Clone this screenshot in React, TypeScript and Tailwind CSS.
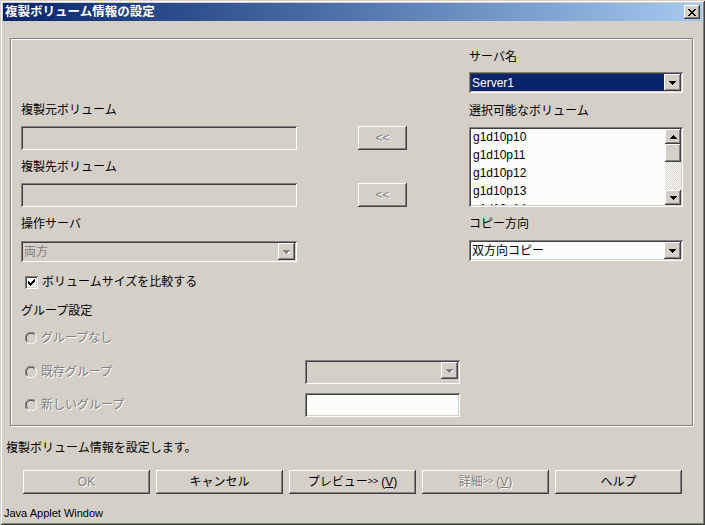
import React from "react";

const RAISED =
  "shadow-[inset_-1px_-1px_#404040,inset_1px_1px_#ffffff,inset_-2px_-2px_#808080,inset_2px_2px_#d4d0c8]";
const SUNKEN =
  "shadow-[inset_1px_1px_#808080,inset_-1px_-1px_#ffffff,inset_2px_2px_#404040,inset_-2px_-2px_#d4d0c8]";
const DIS = "text-[#808080] [text-shadow:1px_1px_0_#ffffff]";

function DownArrow({ disabled }: { disabled?: boolean }) {
  return (
    <svg width="7" height="4" viewBox="0 0 7 4" shapeRendering="crispEdges">
      {disabled && (
        <path d="M1 1h7v1h-1v1h-1v1h-1v1h-1v-1h-1v-1h-1v-1h-1z" fill="#ffffff" />
      )}
      <path d="M0 0h7v1h-1v1h-1v1h-1v1h-1v-1h-1v-1h-1v-1h-1z" fill={disabled ? "#808080" : "#000000"} />
    </svg>
  );
}

function UpArrow() {
  return (
    <svg width="7" height="4" viewBox="0 0 7 4" shapeRendering="crispEdges">
      <path d="M3 0h1v1h1v1h1v1h1v1h-7v-1h1v-1h1v-1h1z" fill="#000000" />
    </svg>
  );
}

function Combo({
  text,
  selected,
  disabled,
  white,
  className,
}: {
  text?: string;
  selected?: boolean;
  disabled?: boolean;
  white?: boolean;
  className?: string;
}) {
  return (
    <div className={`flex h-[21px] p-[2px] ${SUNKEN} ${white ? "bg-[#fbfdfb]" : "bg-[#d4d0c8]"} ${className ?? ""}`}>
      <div
        className={`flex flex-1 items-center pl-[1px] text-[12px] leading-none ${
          selected ? "bg-[#0a246a] text-white" : disabled ? "text-[#808080]" : "text-black"
        }`}
      >
        {text}
      </div>
      <div className={`flex h-[17px] w-[17px] items-center justify-center bg-[#d4d0c8] ${RAISED}`}>
        <DownArrow disabled={disabled} />
      </div>
    </div>
  );
}

function TextField({ white, className }: { white?: boolean; className?: string }) {
  return <div className={`h-[24px] ${SUNKEN} ${white ? "bg-[#fbfdfb]" : "bg-[#d4d0c8]"} ${className ?? ""}`} />;
}

function Btn({
  children,
  disabled,
  className,
}: {
  children: React.ReactNode;
  disabled?: boolean;
  className?: string;
}) {
  return (
    <div
      className={`flex h-[24px] items-center justify-center bg-[#d4d0c8] text-[12px] ${RAISED} ${
        disabled ? DIS : "text-black"
      } ${className ?? ""}`}
    >
      {children}
    </div>
  );
}

function Radio() {
  return (
    <svg width="12" height="12" viewBox="0 0 12 12">
      <circle cx="6" cy="6" r="5" fill="#d4d0c8" />
      <path d="M1.8 10.2 A5.5 5.5 0 0 1 10.2 1.8" fill="none" stroke="#808080" strokeWidth="1" />
      <path d="M10.2 1.8 A5.5 5.5 0 0 1 1.8 10.2" fill="none" stroke="#ffffff" strokeWidth="1" />
      <path d="M2.6 9.4 A4.5 4.5 0 0 1 9.4 2.6" fill="none" stroke="#404040" strokeWidth="1" />
    </svg>
  );
}

function Label({ children, className }: { children: React.ReactNode; className?: string }) {
  return <div className={`h-[16px] text-[12px] leading-[16px] text-black ${className ?? ""}`}>{children}</div>;
}

export default function App() {
  const items = ["g1d10p10", "g1d10p11", "g1d10p12", "g1d10p13", "g1d10p14"];
  return (
    <div
      className={`flex h-[525px] w-[705px] flex-col bg-[#d4d0c8] p-[3px] font-['Liberation_Sans','Noto_Sans_CJK_JP',sans-serif] shadow-[inset_1px_1px_#d4d0c8,inset_-1px_-1px_#404040,inset_2px_2px_#ffffff,inset_-2px_-2px_#808080]`}
    >
      {/* Title bar */}
      <div className="flex h-[18px] items-center justify-between bg-linear-to-r from-[#0a246a] to-[#a6caf0] pl-[2px] pr-[2px]">
        <div className="text-[12.5px] font-bold leading-none text-white">複製ボリューム情報の設定</div>
        <div className={`flex h-[14px] w-[16px] items-center justify-center bg-[#d4d0c8] ${RAISED}`}>
          <svg width="8" height="7" viewBox="0 0 8 7" shapeRendering="crispEdges">
            <path
              d="M0 0h2v1h1v1h2v-1h1v-1h2v1h-1v1h-1v1h-1v1h1v1h1v1h1v1h-2v-1h-1v-1h-2v1h-1v1h-2v-1h1v-1h1v-1h1v-1h-1v-1h-1v-1h-1z"
              fill="#000000"
            />
          </svg>
        </div>
      </div>

      {/* Group box */}
      <div className="ml-[7px] mt-[17px] h-[388px] w-[683px] border border-[#808080] pl-[10px] shadow-[inset_1px_1px_#ffffff,1px_1px_#ffffff]">
        <div className="flex items-start">
          {/* left column */}
          <div className="flex w-[276px] flex-col">
            <Label className="mt-[63px]">複製元ボリューム</Label>
            <TextField className="mt-[8px]" />
            <Label className="mt-[9px]">複製先ボリューム</Label>
            <TextField className="mt-[8px]" />
            <Label className="mt-[9px]">操作サーバ</Label>
            <Combo className="mt-[9px]" text="両方" disabled />
          </div>
          {/* middle column */}
          <div className="ml-[61px] flex w-[49px] flex-col">
            <Btn disabled className="mt-[87px] text-[9px]">
              &lt;&lt;
            </Btn>
            <Btn disabled className="mt-[33px] text-[9px]">
              &lt;&lt;
            </Btn>
          </div>
          {/* right column */}
          <div className="ml-[62px] flex w-[214px] flex-col">
            <Label className="mt-[10px]">サーバ名</Label>
            <Combo className="mt-[7px]" text="Server1" selected white />
            <Label className="mt-[10px]">選択可能なボリューム</Label>
            <div className={`mt-[8px] flex h-[80px] bg-[#fbfdfb] p-[2px] ${SUNKEN}`}>
              <div className="flex-1 overflow-hidden pl-[2px]">
                {items.map((it) => (
                  <div key={it} className="h-[18px] text-[12px] leading-[16px] text-black">
                    {it}
                  </div>
                ))}
              </div>
              <div className="flex w-[16px] flex-col">
                <div className={`flex h-[15px] items-center justify-center bg-[#d4d0c8] ${RAISED}`}>
                  <UpArrow />
                </div>
                <div className={`h-[18px] bg-[#d4d0c8] ${RAISED}`} />
                <div className="flex-1 bg-[repeating-conic-gradient(#d4d0c8_0%_25%,#ffffff_0%_50%)] bg-[length:2px_2px]" />
                <div className={`flex h-[15px] items-center justify-center bg-[#d4d0c8] ${RAISED}`}>
                  <DownArrow />
                </div>
              </div>
            </div>
            <Label className="mt-[9px]">コピー方向</Label>
            <Combo className="mt-[8px]" text="双方向コピー" white />
          </div>
        </div>

        {/* lower section */}
        <div className="flex flex-col">
          <div className="mt-[12px] flex h-[16px] items-center pl-[4px]">
            <div className={`flex h-[13px] w-[13px] items-center justify-center bg-[#fbfdfb] ${SUNKEN}`}>
              <svg width="7" height="7" viewBox="0 0 7 7" shapeRendering="crispEdges">
                <path d="M6 0h1v3h-1v1h-1v1h-1v1h-1v1h-1v-1h-1v-1h-1v-3h1v1h1v1h1v-1h1v-1h1z" fill="#000000" />
              </svg>
            </div>
            <div className="ml-[4px] text-[12px] leading-[16px] text-black">ボリュームサイズを比較する</div>
          </div>
          <Label className="mt-[13px]">グループ設定</Label>
          <div className="mt-[7px] flex h-[24px] items-center">
            <div className="flex w-[284px] items-center pl-[4px]">
              <Radio />
              <span className={`ml-[4px] text-[12px] ${DIS}`}>グループなし</span>
            </div>
          </div>
          <div className="mt-[10px] flex h-[24px] items-center">
            <div className="flex w-[284px] items-center pl-[4px]">
              <Radio />
              <span className={`ml-[4px] text-[12px] ${DIS}`}>既存グループ</span>
            </div>
            <Combo className="h-[24px] w-[155px]" disabled />
          </div>
          <div className="mt-[9px] flex h-[24px] items-center">
            <div className="flex w-[284px] items-center pl-[4px]">
              <Radio />
              <span className={`ml-[4px] text-[12px] ${DIS}`}>新しいグループ</span>
            </div>
            <TextField white className="w-[155px]" />
          </div>
        </div>
      </div>

      {/* Status */}
      <div className="ml-[3px] mt-[14px] h-[16px] text-[12px] leading-[16px] text-black">
        複製ボリューム情報を設定します。
      </div>

      {/* Buttons */}
      <div className="ml-[20px] mt-[14px] flex gap-[6px]">
        <Btn disabled className="w-[127px]">
          OK
        </Btn>
        <Btn className="w-[127px]">キャンセル</Btn>
        <Btn className="w-[127px]">
          プレビュー<span className="text-[9px]">&gt;&gt;</span>
          <span className="ml-[3px]">
            (<u>V</u>)
          </span>
        </Btn>
        <Btn disabled className="w-[127px]">
          詳細<span className="text-[9px]">&gt;&gt;</span>
          <span className="ml-[3px]">
            (<u>V</u>)
          </span>
        </Btn>
        <Btn className="w-[127px]">ヘルプ</Btn>
      </div>

      <div className="ml-[1px] mt-[13px] text-[11px] leading-[13px] text-black">Java Applet Window</div>
    </div>
  );
}
